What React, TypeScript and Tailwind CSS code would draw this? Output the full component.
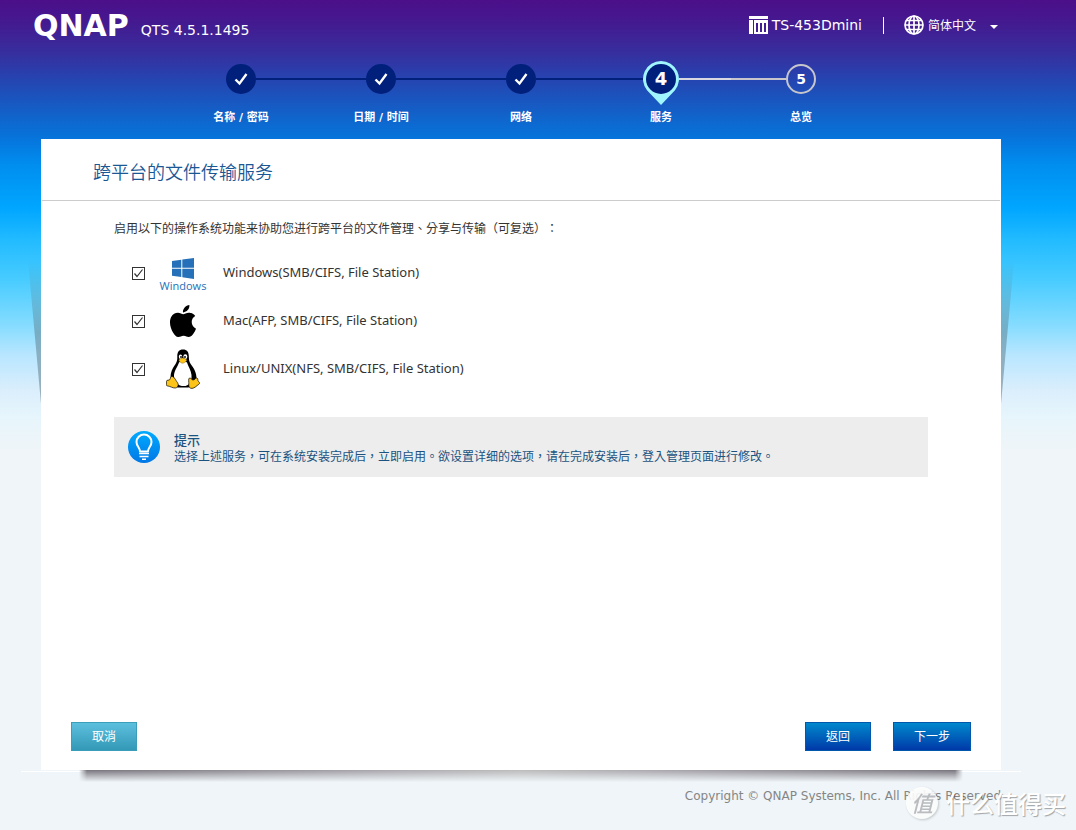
import type { ReactNode } from 'react';
import { SiApple } from 'react-icons/si';

type StepState = 'done' | 'current' | 'todo';

const STEPS: { label: string; state: StepState }[] = [
  { label: '名称 / 密码', state: 'done' },
  { label: '日期 / 时间', state: 'done' },
  { label: '网络', state: 'done' },
  { label: '服务', state: 'current' },
  { label: '总览', state: 'todo' },
];

const SERVICES = [
  { id: 'windows', label: 'Windows(SMB/CIFS, File Station)', icon: <WindowsLogo /> },
  { id: 'mac', label: 'Mac(AFP, SMB/CIFS, File Station)', icon: <SiApple size={32} color="#000" /> },
  { id: 'linux', label: 'Linux/UNIX(NFS, SMB/CIFS, File Station)', icon: <TuxLogo /> },
];

export default function App() {
  return (
    <div className="relative flex min-h-screen flex-col overflow-hidden bg-[#eff5f8] bg-[linear-gradient(to_bottom,#4b0f8a_0px,#45188f_20px,#382c9c_50px,#2545b1_80px,#1064cb_117px,#0675dc_139px,#008eef_165px,#00a6ff_208px,#22bbff_240px,#48ccff_280px,#85dcff_325px,#b8e6ff_355px,#daeefc_390px,#e6f5fc_415px,#eff5f8_450px)] pl-[41px] pr-[75px] font-['DejaVu_Sans','Noto_Sans_CJK_TC',sans-serif] text-xs text-[#333] [text-spacing-trim:space-all]">
      <Header />
      <Stepper />
      <div className="relative flex flex-1 flex-col">
        <SideShadows />
        <main className="relative flex flex-1 flex-col bg-white">
          <h1 className="mx-px flex h-[62px] items-center border-b border-[#ccc] pl-[51px] pt-0.5 text-lg text-[#1a5795] font-['Noto_Sans_CJK_TC',sans-serif] font-[350]">
            跨平台的文件传输服务
          </h1>
          <div className="flex-1 px-[73px] pt-5">
            <p className="leading-4">启用以下的操作系统功能来协助您进行跨平台的文件管理、分享与传输（可复选）：</p>
            <ul className="mt-3">
              {SERVICES.map(service => (
                <li key={service.id}>
                  <label className="flex h-12 items-center">
                    <span className="ml-[18px] grid">
                      <input
                        type="checkbox"
                        name={service.id}
                        defaultChecked
                        className="peer col-start-1 row-start-1 size-[13px] appearance-none border border-[#333] bg-white"
                      />
                      <svg viewBox="0 0 13 13" className="pointer-events-none invisible col-start-1 row-start-1 size-[13px] peer-checked:visible">
                        <path d="M2.5 6.5 5 9.5 10.5 2.5" fill="none" stroke="#333" strokeWidth="1.2" />
                      </svg>
                    </span>
                    <span className="ml-[14px] flex w-12 justify-center">{service.icon}</span>
                    <span className="ml-4 text-[13px] font-['Noto_Sans',sans-serif]">{service.label}</span>
                  </label>
                </li>
              ))}
            </ul>
            <Hint />
          </div>
          <div className="flex items-center px-[30px] pb-[19px]">
            <WizardButton className="w-[66px] border-[#3a9dba] bg-linear-to-b from-[#5bc0de] to-[#3398b6]">取消</WizardButton>
            <div className="ml-auto flex gap-[22px]">
              <WizardButton className="w-[66px] border-[#0058ac] bg-linear-to-b from-[#0088cc] to-[#0038a8]">返回</WizardButton>
              <WizardButton className="w-[78px] border-[#0058ac] bg-linear-to-b from-[#0088cc] to-[#0038a8]">下一步</WizardButton>
            </div>
          </div>
        </main>
      </div>
      <div className="mx-[38px] h-3 bg-[linear-gradient(to_right,transparent,#77737c_8px,#a9a7ad_35%,#bbb_50%,#a9a7ad_65%,#77737c_calc(100%-8px),transparent)] mask-b-from-0% mask-b-to-100%" />
      <footer className="flex h-12 justify-end pt-1.5 text-[#858585]">Copyright © QNAP Systems, Inc. All Rights Reserved</footer>
      <Watermark />
    </div>
  );
}

function Header() {
  return (
    <header className="-mx-2 flex h-[61px] items-start text-sm text-white">
      <span className="text-[30px] font-bold leading-[52px]">QNAP</span>
      <span className="ml-3 leading-[60px]">QTS 4.5.1.1495</span>
      <div className="ml-auto mr-[11px] flex h-[50px] items-center">
        <svg viewBox="0 0 19 18" className="h-[18px] w-[19px]" fill="#fff">
          <path d="M0 0h19v3H0zM0 4h4v14H0zM5 4h14v14H5zM7 7v9h2V7zM11 7v9h2V7zM15 7v9h2V7z" fillRule="evenodd" />
        </svg>
        <span className="ml-1">TS-453Dmini</span>
        <span className="ml-[21px] h-[17px] w-px bg-white" />
        <button type="button" className="ml-5 flex items-center text-xs">
          <svg viewBox="0 0 20 20" className="size-5" fill="none" stroke="#fff" strokeWidth="1.7">
            <circle cx="10" cy="10" r="9" />
            <ellipse cx="10" cy="10" rx="5" ry="9" />
            <path d="M10 1v18M1 10h18M2.5 5.5h15M2.5 14.5h15" />
          </svg>
          <span className="ml-1 font-['Noto_Sans_CJK_SC',sans-serif]">简体中文</span>
          <svg viewBox="0 0 8 4" className="ml-[14px] mt-1 h-1 w-2" fill="#fff">
            <path d="M0 0h8L4 4z" />
          </svg>
        </button>
      </div>
    </header>
  );
}

function Stepper() {
  return (
    <ol className="mx-auto grid h-[78px] w-[700px] grid-cols-5 text-white">
      {STEPS.map((step, i) => {
        const last = i === STEPS.length - 1;
        return (
          <li key={step.label}>
            <div className="flex h-9 items-center">
              <span className={`h-0.5 flex-1 ${i === 0 ? 'invisible' : step.state === 'todo' ? 'bg-[#c6c6cc]' : 'bg-[#00207c]'}`} />
              <StepMarker state={step.state} number={i + 1} />
              <span className={`h-0.5 flex-1 ${last ? 'invisible' : step.state === 'done' ? 'bg-[#00207c]' : 'bg-[#d8d8e0]'}`} />
            </div>
            <div className="mt-[13px] text-center text-[11px] font-bold leading-4 font-['DejaVu_Sans','Noto_Sans_CJK_SC',sans-serif]">{step.label}</div>
          </li>
        );
      })}
    </ol>
  );
}

function StepMarker({ state, number }: { state: StepState; number: number }) {
  if (state === 'done') {
    return (
      <span className="flex size-[30px] items-center justify-center rounded-full bg-[#00207c]">
        <svg viewBox="0 0 14 14" className="size-[14px]" fill="none" stroke="#fff" strokeWidth="2.4">
          <path d="M1.5 7.5 5.5 11.5 12.5 2" />
        </svg>
      </span>
    );
  }

  if (state === 'current') {
    return (
      <span className="relative flex size-9 items-center justify-center text-lg font-bold">
        <svg viewBox="0 0 36 44" className="absolute left-0 top-0 h-11 w-9">
          <path d="M18 0a18 18 0 0 1 14 29.300L18 44 4 29.300A18 18 0 0 1 18 0z" fill="#9ff6ff" />
          <circle cx="18" cy="18" r="15" fill="#00207c" />
        </svg>
        <span className="relative leading-9">{number}</span>
      </span>
    );
  }

  return (
    <span className="flex size-[30px] items-center justify-center rounded-full border-2 border-[#c6c6cc] text-sm font-bold">
      {number}
    </span>
  );
}

// Folded-paper shadows that stick out on both sides of the panel
function SideShadows() {
  return (
    <>
      <div className="absolute -left-[13px] top-[121px] h-36 w-[13px] bg-linear-to-b from-[#55717d]/0 via-[#55717d]/45 to-[#55717d]/50 [clip-path:polygon(0_0,100%_0,100%_100%)]" />
      <div className="absolute -right-[13px] top-[121px] h-36 w-[13px] bg-linear-to-b from-[#55717d]/0 via-[#55717d]/45 to-[#55717d]/50 [clip-path:polygon(0_0,100%_0,0_100%)]" />
      <div className="absolute -bottom-0.5 -left-5 -right-5 h-px bg-white" />
    </>
  );
}

function Hint() {
  return (
    <div className="mt-6 flex min-h-[60px] items-center bg-[#ededed] px-[14px] text-[#1b5380]">
      <svg viewBox="0 0 32 32" className="size-8 shrink-0">
        <defs>
          <linearGradient id="bulb" x1="0" y1="0" x2="0" y2="1">
            <stop offset="0" stopColor="#00aaff" />
            <stop offset="1" stopColor="#0078e6" />
          </linearGradient>
        </defs>
        <circle cx="16" cy="16" r="16" fill="url(#bulb)" />
        <path
          d="M12 20.500c0-4-3.500-5-3.500-9.500a7.500 7.500 0 0 1 15 0c0 4.500-3.500 5.500-3.500 9.500z"
          fill="none"
          stroke="#fff"
          strokeWidth="2"
          strokeLinejoin="round"
        />
        <path d="M11 22.500h10M11.500 25.500h9" stroke="#fff" strokeWidth="1.500" />
        <path d="M14 27.500h4v1.500h-4z" fill="#fff" />
      </svg>
      <div className="ml-[14px] pt-[3px] leading-4">
        <h2 className="text-[13px] font-medium">提示</h2>
        <p>选择上述服务，可在系统安装完成后，立即启用。欲设置详细的选项，请在完成安装后，登入管理页面进行修改。</p>
      </div>
    </div>
  );
}

function WizardButton({ className, children }: { className: string; children: ReactNode }) {
  return (
    <button type="button" className={`h-[29px] border text-xs text-white ${className}`}>
      {children}
    </button>
  );
}

function WindowsLogo() {
  return (
    <span className="flex flex-col items-center pt-1">
      <svg viewBox="0 0 22 21" className="h-[21px] w-[22px]" fill="#2570b8">
        <path d="M0 3 9.300 1.700v8H0zM10.300 1.600 22 0v9.700H10.300zM0 10.700h9.300v8.200L0 17.700zM10.300 10.700H22V21l-11.700-1.700z" />
      </svg>
      <span className="font-['Open_Sans',sans-serif] text-[11px] leading-[14px] text-[#2570b8]">Windows</span>
    </span>
  );
}

function TuxLogo() {
  return (
    <svg viewBox="0 0 34 40" className="h-10 w-[34px]">
      <path
        d="M17 .5c-4 0-5.800 2.700-5.700 6.500.1 4.500-.3 6-2.600 9.300C6.500 19.500 4.500 23.500 4.500 28l2 6 5 4.500h11l6-5 2-4.500c0-5-2.500-10-5.500-13.500-2-2.500-2-5-2.200-8.500C22.600 2.700 21 .5 17 .5z"
        fill="#000"
      />
      <path d="M13 13.500c-1 3.500-4.500 7.500-5 12.500-.3 4 2 9 6 10.500 4 1.300 8 .5 10-2.500 1-2 1.800-4.500 1.500-8-.5-5-3.500-9-4.500-12.500-3-2-5-2-8 0z" fill="#fff" />
      <ellipse cx="14.500" cy="7.700" rx="1.700" ry="2.300" fill="#fff" />
      <ellipse cx="19.300" cy="7.700" rx="2" ry="2.400" fill="#fff" />
      <circle cx="15" cy="8" r=".9" />
      <circle cx="19" cy="8" r=".9" />
      <path d="M12.800 11c1.500-1.500 3-2 4-2s3 1 4.200 2c-1 2-3 3.200-4.500 3.200S13.500 12.800 12.800 11z" fill="#fcc419" stroke="#6b5200" strokeWidth=".4" />
      <path
        d="M5.500 27.500c2.300-.8 4 3.500 6 6.200 1.500 2.200.5 5-2.200 5.300-2.600.2-5-1.800-8.300-2.200-1.300-.3-.3-2.300-.5-4.500 0-1.600 2.600-.8 3.300-1.700.7-.8.5-2.700 1.700-3.100z"
        fill="#fcc419"
        stroke="#000"
        strokeWidth=".7"
      />
      <path
        d="M23.500 29c1.600-.8 1.500 2 3.500 2 2.200 0 2.300-2.500 4-2 1.300.5.300 2.500 1.700 3.700 1 1 1.300 1.800 0 2.700-2 1.200-4 3.800-6.700 4-2.500 0-3.500-1.500-3.200-4.200.2-2-.8-5.700.7-6.200z"
        fill="#fcc419"
        stroke="#000"
        strokeWidth=".7"
      />
    </svg>
  );
}

function Watermark() {
  return (
    <div className="pointer-events-none absolute bottom-[9px] right-2.5 flex items-center gap-2 font-['Noto_Sans_CJK_SC',sans-serif] text-white">
      <span className="flex size-8 items-center justify-center rounded-full bg-white/90 text-[22px] font-medium italic text-[#b9bdc0] drop-shadow-[1px_1px_1px_#0003]">
        值
      </span>
      <span className="text-2xl font-medium leading-9 [text-shadow:1px_1px_1px_#0005]">什么值得买</span>
    </div>
  );
}
